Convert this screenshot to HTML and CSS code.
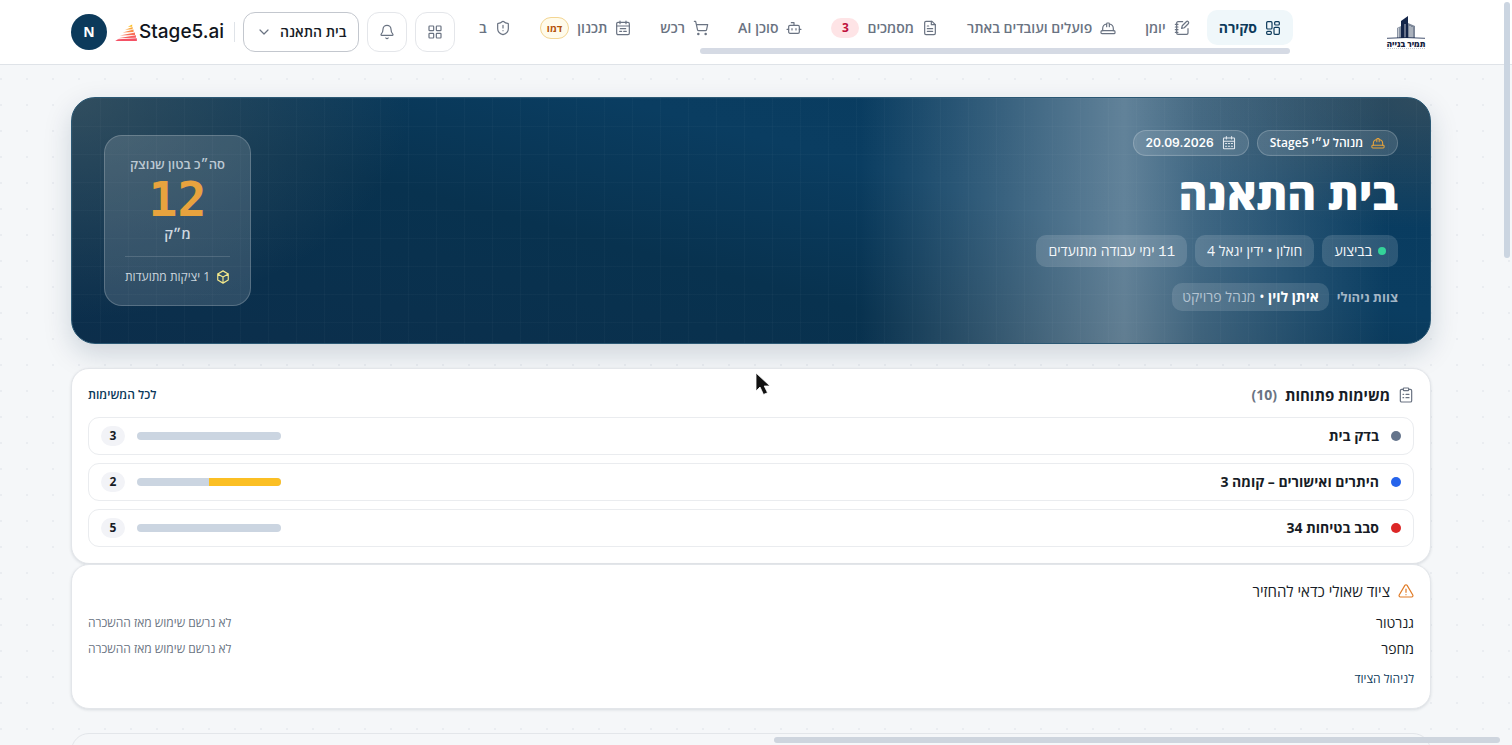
FILE: index.html
```html
<!DOCTYPE html>
<html lang="he" dir="rtl">
<head>
<meta charset="utf-8">
<title>Stage5.ai – בית התאנה</title>
<link rel="stylesheet" href="styles.css">
</head>
<body>
<header class="topbar">
  <div class="topbar-inner">
    <a class="company" href="#" aria-label="תמיר בנייה">
      <svg class="company-mark" viewBox="0 0 42 24" aria-hidden="true">
        <path d="M12 13l6-3v13h-6z" fill="#8b95a5"/>
        <path d="M16 6l7-5v22h-7z" fill="#14264a"/>
        <path d="M23 8l7 3v12h-7z" fill="#7d8798"/>
        <path d="M20 9v14M25 11v12M27 12v11" stroke="#fff" stroke-width=".7"/>
        <path d="M13.500 13v10" stroke="#fff" stroke-width=".5"/>
        <path d="M2 23.300q19-1.500 38 0" stroke="#14264a" stroke-width=".8" fill="none"/>
      </svg>
      <span class="company-name">תמיר בנייה</span>
      <span class="company-line"></span>
    </a>
    <div class="nav-wrap">
      <nav class="nav">
        <a class="nav-item active" href="#"><svg class="icon" viewBox="0 0 24 24"><rect x="2.500" y="2.500" width="8" height="11" rx="1.500"/><rect x="14.500" y="2.500" width="7" height="5" rx="1.500"/><rect x="13.500" y="11" width="8" height="10.500" rx="1.500"/><rect x="2.500" y="17" width="7" height="4.500" rx="1.500"/></svg>סקירה</a>
        <a class="nav-item" href="#"><svg class="icon" viewBox="0 0 24 24"><path d="M13 2.500H6a2 2 0 0 0-2 2v15a2 2 0 0 0 2 2h13a2 2 0 0 0 2-2V13"/><path d="M2 6.500h4M2 10.500h4M2 14.500h4M2 18.500h4"/><path d="M21.400 5.600a2 2 0 0 0-3-3l-6 6-1 4 4-1z"/></svg>יומן</a>
        <a class="nav-item" href="#"><svg class="icon" viewBox="0 0 24 24"><path d="M10 10V5.500a1 1 0 0 1 1-1h2a1 1 0 0 1 1 1V10M14 6a7 7 0 0 1 6 7v3M4 16v-3a7 7 0 0 1 6-7"/><rect x="1.500" y="16" width="21" height="4.500" rx="1.500"/></svg>פועלים ועובדים באתר</a>
        <a class="nav-item" href="#"><svg class="icon" viewBox="0 0 24 24"><path d="M15 2H6a2 2 0 0 0-2 2v16a2 2 0 0 0 2 2h12a2 2 0 0 0 2-2V7z"/><path d="M14 2v5h6M8 9h2M8 13h8M8 17h8"/></svg>מסמכים<span class="count">3</span></a>
        <a class="nav-item" href="#"><svg class="icon" viewBox="0 0 24 24"><path d="M12 8V4H8"/><rect x="4" y="8" width="16" height="12" rx="2"/><path d="M1.500 14H4M20 14h2.500M9 13v2M15 13v2"/></svg>סוכן AI</a>
        <a class="nav-item" href="#"><svg class="icon" viewBox="0 0 24 24"><circle cx="8" cy="21" r="1"/><circle cx="19" cy="21" r="1"/><path d="M2 2h2l2.700 12.400a2 2 0 0 0 2 1.600h9.700a2 2 0 0 0 2-1.600L22 7H5.100"/></svg>רכש</a>
        <a class="nav-item" href="#"><svg class="icon" viewBox="0 0 24 24"><rect x="2.500" y="3.500" width="19" height="18.500" rx="2"/><path d="M7.500 1.500v4M16.500 1.500v4M2.500 9h19M8 13h8M7 17h3M13 17h4"/></svg>תכנון<span class="demo">דמו</span></a>
        <a class="nav-item" href="#"><svg class="icon" viewBox="0 0 24 24"><path d="M20 13c0 5-3.500 7.500-8 9-4.500-1.500-8-4-8-9V6a1 1 0 0 1 1-1c2 0 4.500-1.200 6.200-2.700a1.200 1.200 0 0 1 1.600 0C14.500 3.800 17 5 19 5a1 1 0 0 1 1 1z"/><path d="M12 8v4M12 16v.1"/></svg>בטיחות</a>
      </nav>
      <div class="nav-scroll"><span></span></div>
    </div>
    <div class="tools">
      <button class="tool" type="button" aria-label="יישומים"><svg class="icon" viewBox="0 0 24 24"><rect x="3" y="3" width="7" height="7" rx="1"/><rect x="14" y="3" width="7" height="7" rx="1"/><rect x="3" y="14" width="7" height="7" rx="1"/><rect x="14" y="14" width="7" height="7" rx="1"/></svg></button>
      <button class="tool" type="button" aria-label="התראות"><svg class="icon" viewBox="0 0 24 24"><path d="M10.300 21a2 2 0 0 0 3.400 0"/><path d="M3.300 15.300A1 1 0 0 0 4 17h16a1 1 0 0 0 .7-1.700C19.400 14 18 12.500 18 8A6 6 0 0 0 6 8c0 4.500-1.400 6-2.700 7.300"/></svg></button>
      <button class="project" type="button">בית התאנה<svg class="icon" viewBox="0 0 24 24"><path d="M6 9l6 6 6-6"/></svg></button>
      <span class="divider"></span>
      <a class="brand" href="#" dir="ltr"><svg class="brand-mark" viewBox="0 0 24 18" aria-hidden="true"><path d="M13.500 3L18 .5V3z" fill="#fbbf24"/><path d="M10.500 6L18.500 3.200V5.600z" fill="#fba53a"/><path d="M8 9L19.500 5.800V8.600z" fill="#fb8a4a"/><path d="M5 12.200L21 8.900v2.700z" fill="#f9705a"/><path d="M3 15.200l19-3.300v2.700z" fill="#f65f60"/><path d="M0 18l3-1.800 20-1.200V18z" fill="#f45165"/></svg><span>Stage5.ai</span></a>
      <button class="avatar" type="button">N</button>
    </div>
  </div>
</header>

<main class="page">
  <section class="hero">
    <div class="hero-main">
      <div class="badges">
        <span class="badge"><svg class="icon amber" viewBox="0 0 24 24"><path d="M10 10V5.500a1 1 0 0 1 1-1h2a1 1 0 0 1 1 1V10M14 6a7 7 0 0 1 6 7v3M4 16v-3a7 7 0 0 1 6-7"/><rect x="1.500" y="16" width="21" height="4.500" rx="1.500"/></svg>מנוהל ע״י Stage5</span>
        <span class="badge date"><svg class="icon" viewBox="0 0 24 24"><rect x="2.500" y="3.500" width="19" height="18.500" rx="1"/><path d="M7.500 1v4M16.500 1v4M2.500 9h19"/><path d="M6 13h12M6 17.500h12" stroke-dasharray="2 3"/></svg>20.09.2026</span>
      </div>
      <h1>בית התאנה</h1>
      <div class="chips">
        <span class="chip"><i class="status"></i>בביצוע</span>
        <span class="chip">חולון • ידין יגאל 4</span>
        <span class="chip"><span><span class="mono">11</span> ימי עבודה מתועדים</span></span>
      </div>
      <div class="team">
        <span class="team-label">צוות ניהולי</span>
        <span class="member"><b>איתן לוין</b> • <span class="role">מנהל פרויקט</span></span>
      </div>
    </div>
    <aside class="stat">
      <span class="stat-label">סה״כ בטון שנוצק</span>
      <strong class="stat-value">12</strong>
      <span class="stat-unit">מ״ק</span>
      <span class="stat-foot"><svg class="icon" viewBox="0 0 24 24"><path d="M12 1.500l9 5.200v10.600l-9 5.200-9-5.200V6.700zM3 6.700l9 5.300 9-5.300M12 12v10.500"/></svg>1 יציקות מתועדות</span>
    </aside>
  </section>

  <section class="card tasks">
    <div class="card-head">
      <svg class="icon" viewBox="0 0 24 24"><rect x="8" y="1.500" width="8" height="4" rx="1"/><path d="M16 3.500h2.500a2 2 0 0 1 2 2v15a2 2 0 0 1-2 2h-13a2 2 0 0 1-2-2v-15a2 2 0 0 1 2-2H8M12 11h4.500M12 16h4.500M7.500 11h1M7.500 16h1"/></svg>
      <h2>משימות פתוחות</h2><span class="total">(10)</span>
      <a class="all" href="#">לכל המשימות</a>
    </div>
    <ul class="rows">
      <li class="row"><i class="dot slate"></i><span class="row-name">בדק בית</span><span class="bar"></span><span class="num">3</span></li>
      <li class="row"><i class="dot blue"></i><span class="row-name">היתרים ואישורים – קומה 3</span><span class="bar"><span style="width:50%"></span></span><span class="num">2</span></li>
      <li class="row"><i class="dot red"></i><span class="row-name">סבב בטיחות 34</span><span class="bar"></span><span class="num">5</span></li>
    </ul>
  </section>

  <section class="card equipment">
    <div class="card-head">
      <svg class="icon warn" viewBox="0 0 24 24"><path d="M10.300 3.600L1.800 18a2 2 0 0 0 1.700 3h17a2 2 0 0 0 1.700-3L13.700 3.600a2 2 0 0 0-3.400 0zM12 9v5M12 17.500v.1"/></svg>
      <h2>ציוד שאולי כדאי להחזיר</h2>
    </div>
    <ul class="items">
      <li><span>גנרטור</span><small>לא נרשם שימוש מאז ההשכרה</small></li>
      <li><span>מחפר</span><small>לא נרשם שימוש מאז ההשכרה</small></li>
    </ul>
    <a class="manage" href="#">לניהול הציוד</a>
  </section>
  <section class="card next"></section>
</main>
<div class="scroll-y"></div>
<div class="scroll-x"></div>
<svg class="cursor" viewBox="0 0 16 24" aria-hidden="true"><path d="M1 1v18l4-4 3.500 7.500 4-1.800L9.200 14H15z" fill="#111" stroke="#fff" stroke-width=".8"/></svg>
</body>
</html>
```
FILE: styles.css
```css
* { box-sizing: border-box; }
html { height: 100%; overflow: hidden; }
body {
  margin: 0;
  height: 100%;
  overflow: hidden;
  padding-right: 10px;
  font-family: "Open Sans", "Liberation Sans", sans-serif;
  font-size: 14px;
  line-height: 20px;
  color: #171c26;
  background: radial-gradient(circle at 1px 1px, #eaedf1 1px, transparent 1px) 0 0 / 26px 26px, #f5f7f9;
}
a { color: inherit; text-decoration: none; }
button { font: inherit; color: inherit; cursor: pointer; }
ul { list-style: none; margin: 0; padding: 0; }
h1, h2 { margin: 0; }
.icon { width: 16px; height: 16px; flex: none; fill: none; stroke: currentColor; stroke-width: 1.8; stroke-linecap: round; stroke-linejoin: round; }

.topbar { background: #fff; border-bottom: 1px solid #dfe3e8; margin-right: -10px; padding-right: 10px; }
.topbar-inner { width: calc(100% - 142px); max-width: 1360px; height: 64px; margin: 0 auto; display: flex; align-items: center; }
.company { width: 50px; flex: none; display: flex; flex-direction: column; align-items: center; margin-left: 88px; }
.company-mark { width: 42px; height: 24px; }
.company-name { font-size: 8px; line-height: 9px; font-weight: 800; color: #17233f; white-space: nowrap; }
.company-line { width: 38px; border-top: 1px dotted #c3c8d0; }
.nav-wrap { flex: 1; min-width: 0; }
.nav { display: flex; gap: 5px; overflow: hidden; }
.nav-item { flex: none; height: 35px; display: flex; align-items: center; gap: 8px; padding: 0 12px; border-radius: 10px; font-weight: 600; color: #6a7382; white-space: nowrap; }
.nav-item.active { background: #eff7fa; color: #0c3a5b; font-weight: 700; }
.count { min-width: 28px; padding: 0 8px; text-align: center; border-radius: 10px; background: #fee4e6; color: #be123c; font-size: 12px; font-weight: 700; }
.demo { border: 1px solid #f3d592; background: #fffbeb; color: #b45309; border-radius: 11px; font-size: 10px; font-weight: 700; padding: 0 6px; }
.nav-scroll { height: 6px; margin-top: 3px; padding: 0 3px; }
.nav-scroll span { display: block; width: 73%; height: 6px; border-radius: 3px; background: #d5dae4; }
.tools { flex: none; display: flex; align-items: center; gap: 8px; margin-right: 24px; }
.tool, .project { height: 40px; border: 1px solid #e4e6ea; border-radius: 12px; background: #fff; display: flex; align-items: center; justify-content: center; }
.tool { width: 40px; padding: 0; color: #6a7382; }
.project { gap: 8px; padding: 0 12px; border-color: #c3c7ce; font-weight: 600; white-space: nowrap; }
.project .icon { color: #6a7382; }
.divider { width: 1px; height: 20px; background: #dfe3e8; }
.brand { display: flex; align-items: center; gap: 1px; width: 108px; margin-right: 3px; font-family: Inter, sans-serif; font-size: 19px; font-weight: 500; color: #11151c; }
.brand-mark { width: 23px; height: 17px; flex: none; }
.avatar { width: 36px; height: 36px; border: 0; border-radius: 50%; background: #0c3a5b; color: #fff; font-weight: 700; padding: 0; }

.page { width: calc(100% - 132px); max-width: 1360px; margin: 0 auto; padding-top: 32px; }
.hero {
  display: flex; align-items: center; justify-content: space-between;
  padding: 32px; border-radius: 24px; border: 1px solid #2b5874; color: #fff;
  background:
    repeating-linear-gradient(90deg, rgba(255,255,255,.025) 0 1px, transparent 1px 28px),
    repeating-linear-gradient(180deg, rgba(255,255,255,.025) 0 1px, transparent 1px 28px),
    linear-gradient(90deg, transparent 58%, rgba(255,255,255,.2) 69%, rgba(255,255,255,.36) 77.500%, rgba(255,255,255,.22) 83%, transparent 97%),
    radial-gradient(ellipse 340px 220px at 0 0, rgba(90,106,112,.5), transparent),
    radial-gradient(ellipse 300px 130px at 100% 0, rgba(80,90,94,.55), transparent),
    linear-gradient(15deg, #0c2e4b 0%, #08324f 40%, #0a3d61 64%, #083b5f 100%);
  box-shadow: 0 10px 28px rgba(12,42,72,.17);
}
.hero-main { display: flex; flex-direction: column; align-items: flex-start; }
.badges, .chips, .team { display: flex; align-items: center; gap: 8px; }
.badge { height: 26px; display: flex; align-items: center; gap: 8px; padding: 0 12px; border: 1px solid rgba(255,255,255,.2); border-radius: 13px; background: rgba(255,255,255,.12); font-size: 12px; font-weight: 600; }
.badge.date { font-family: Inter, sans-serif; }
.badge .icon { width: 14px; height: 14px; color: #e3e9ef; }
.badge .icon.amber { color: #e8a33a; }
h1 { font-size: 44px; line-height: 59px; font-weight: 800; margin: 8px 0 12px; }
.chip { height: 32px; display: flex; align-items: center; gap: 6px; padding: 0 12px; border-radius: 10px; background: rgba(255,255,255,.14); color: #f3f6f9; }
.mono { font-family: "Liberation Mono", monospace; }
.status { width: 8px; height: 8px; border-radius: 50%; background: #34d399; }
.team { margin-top: 16px; }
.team-label { font-size: 13px; font-weight: 700; color: #a3b6c6; }
.member { height: 28px; line-height: 28px; padding: 0 10px; border-radius: 10px; background: rgba(255,255,255,.13); }
.role { color: #b5c4d2; }
.stat { width: 147px; height: 171px; flex: none; padding: 18px 20px; border: 1px solid rgba(255,255,255,.2); border-radius: 18px; background: rgba(255,255,255,.14); display: flex; flex-direction: column; align-items: center; white-space: nowrap; }
.stat-label { font-size: 13px; font-weight: 600; color: #bcc9d3; }
.stat-value { font-family: "DejaVu Sans Mono", monospace; font-size: 48px; line-height: 50px; color: #e8a33e; }
.stat-unit { font-weight: 600; color: #cfd8e0; }
.stat-foot { align-self: stretch; display: flex; justify-content: center; align-items: center; gap: 6px; border-top: 1px solid rgba(255,255,255,.15); margin-top: 12px; padding-top: 10px; font-size: 12px; color: #ccd6de; }
.stat-foot .icon { width: 14px; height: 14px; color: #f3e88a; stroke-width: 2; }

.card { background: #fff; border: 1px solid #e3e6ea; border-radius: 18px; box-shadow: 0 1px 3px rgba(20,30,50,.12); padding: 16px; }
.tasks { margin-top: 24px; }
.card-head { display: flex; align-items: center; gap: 8px; height: 20px; }
.card-head .icon { color: #6a7382; }
.card-head .icon.warn { color: #e07b26; }
h2 { font-size: 15px; font-weight: 700; }
.total { font-size: 14px; font-weight: 700; color: #6a7382; }
.all { margin-right: auto; font-size: 12px; font-weight: 600; color: #0c3a5b; }
.rows { display: grid; gap: 8px; margin-top: 12px; }
.row { height: 38px; display: flex; align-items: center; gap: 12px; padding: 0 12px; border: 1px solid #eaecef; border-radius: 11px; font-weight: 700; }
.row-name { flex: 1; }
.dot { width: 10px; height: 10px; border-radius: 50%; }
.slate { background: #64748b; }
.blue { background: #2563eb; }
.red { background: #dc2626; }
.bar { width: 144px; height: 8px; border-radius: 4px; overflow: hidden; background: #cbd5e1; }
.bar span { display: block; height: 8px; background: #fbbf24; }
.num { width: 24px; height: 20px; border-radius: 10px; background: #f2f3f7; text-align: center; font-size: 12px; font-weight: 700; }
.equipment h2 { font-weight: 400; }
.items { display: grid; gap: 6px; margin-top: 12px; }
.items li { display: flex; justify-content: space-between; }
.items small, .manage { font-size: 12px; }
.items small { color: #6a7382; }
.manage { display: block; margin-top: 10px; color: #0c3a5b; }
.equipment { padding-bottom: 19px; }
.next { margin-top: 24px; height: 80px; background: #f5f7f9; box-shadow: none; }

.scroll-y { position: fixed; right: 2px; top: 2px; width: 6px; height: 256px; border-radius: 3px; background: #cbd5e1; }
.scroll-x { position: fixed; right: 12px; bottom: 2px; width: 48%; height: 6px; border-radius: 3px; background: #ced5de; }
.cursor { position: fixed; left: 755px; top: 372px; width: 16px; height: 24px; }
```
